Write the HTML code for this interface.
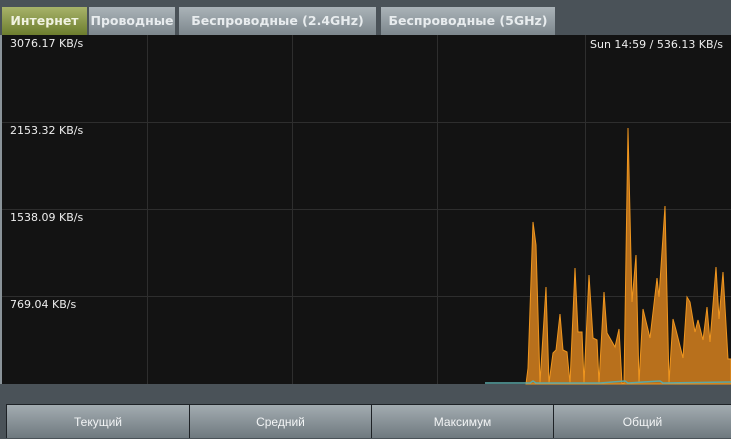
<!DOCTYPE html>
<html><head><meta charset="utf-8"><style>
body{margin:0;width:731px;height:438px;background:#4a5258;overflow:hidden;font-family:"Liberation Sans","DejaVu Sans",sans-serif;position:relative}
.tab{position:absolute;top:7px;height:28px;line-height:28px;text-align:center;color:#e8ecee;font-weight:bold;font-size:12.5px;font-family:"DejaVu Sans",sans-serif;background:linear-gradient(#aab3b8,#7d878d);}
.t1{background:linear-gradient(#a7b36a,#6d7d2e);color:#f0f2e0}
#chart{position:absolute;left:0;top:35px;width:731px;height:349px;background:#131313;border-left:2px solid #8a9399;box-sizing:border-box}
.lbl{position:absolute;left:10px;color:#eee;font-size:11px;font-family:"DejaVu Sans",sans-serif}
.btn{position:absolute;top:404px;height:34px;line-height:34px;text-align:center;color:#f2f4f5;font-size:12px;background:linear-gradient(#a3acb1,#6f797f);border-left:1px solid #1e2226;border-top:1px solid #1e2226;box-sizing:border-box}
</style></head><body>
<div class="tab t1" style="left:2px;width:85px">Интернет</div>
<div class="tab" style="left:89px;width:86px">Проводные</div>
<div class="tab" style="left:179px;width:197px">Беспроводные (2.4GHz)</div>
<div class="tab" style="left:381px;width:174px">Беспроводные (5GHz)</div>
<div id="chart"></div>
<svg style="position:absolute;left:0;top:0" width="731" height="438">
<g stroke="#2e2e2e" stroke-width="1">
<line x1="147.5" y1="35" x2="147.5" y2="384"/><line x1="292.5" y1="35" x2="292.5" y2="384"/><line x1="437.5" y1="35" x2="437.5" y2="384"/><line x1="585.5" y1="35" x2="585.5" y2="384"/>
<line x1="2" y1="122.5" x2="731" y2="122.5"/><line x1="2" y1="209.5" x2="731" y2="209.5"/><line x1="2" y1="296.5" x2="731" y2="296.5"/>
</g>
<polygon fill="#b8701c" stroke="#f0961e" stroke-width="1" points="526,384 528,368 533,222 536,245 540,383 546,287 549,383 553,353 556,350 560,314 563,350 567,352 570,383 575,268 578,332 582,332 584,383 589,275 593,338 597,340 599,383 604,292 607,333 615,347 619,329 622,383 624,383 628,128 632,302 636,255 639,383 643,309 650,338 657,278 659,297 665,206 669,383 673,319 676,330 683,358 687,297 690,302 695,332 698,320 703,340 707,307 710,342 716,267 719,319 723,272 728,359 731,359 731,384"/>
<polyline fill="none" stroke="#5aa8a8" stroke-width="1.5" points="485,383 530,383 533,381 536,383 600,383 625,381 628,383 660,381 663,383 731,382"/>
</svg>
<div class="lbl" style="top:37px">3076.17 KB/s</div>
<div class="lbl" style="top:124px">2153.32 KB/s</div>
<div class="lbl" style="top:211px">1538.09 KB/s</div>
<div class="lbl" style="top:298px">769.04 KB/s</div>
<div class="lbl" style="left:590px;top:38px">Sun 14:59 / 536.13 KB/s</div>
<div class="btn" style="left:6px;width:183px">Текущий</div>
<div class="btn" style="left:189px;width:182px">Средний</div>
<div class="btn" style="left:371px;width:182px">Максимум</div>
<div class="btn" style="left:553px;width:178px">Общий</div>
</body></html>
